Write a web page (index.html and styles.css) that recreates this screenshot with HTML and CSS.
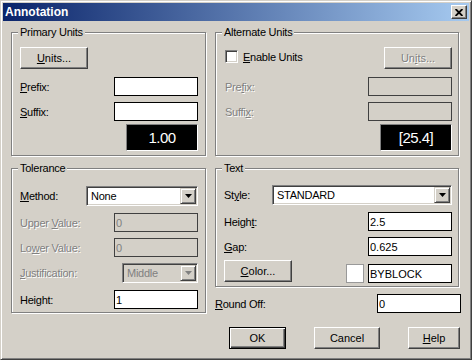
FILE: index.html
```html
<!doctype html>
<html lang="en">
<head>
    <meta charset="utf-8">
    <title>Annotation</title>
    <link rel="stylesheet" href="styles.css">
</head>
<body>
<div class="window">
    <div class="titlebar">
        <span class="title">Annotation</span>
        <button class="close" title="Close">
            <svg width="8" height="7" viewBox="0 0 8 7"><path d="M0.6 0 L7.4 7 M7.4 0 L0.6 7" stroke="#000" stroke-width="1.8" fill="none"/></svg>
        </button>
    </div>

    <div class="client">
        <div class="group">
            <div class="legend">Primary Units</div>
            <button class="btn btn-wide"><u>U</u>nits...</button>
            <div class="row mt8"><span><u>P</u>refix:</span><input class="field" value=""></div>
            <div class="row mt6"><span><u>S</u>uffix:</span><input class="field" value=""></div>
            <div class="row mt3"><span></span><div class="sample">1.00</div></div>
        </div>

        <div class="group">
            <div class="legend">Alternate Units</div>
            <div class="row">
                <div class="check"><span class="checkbox"></span><span><u>E</u>nable Units</span></div>
                <button class="btn btn-wide" disabled><span class="dim">Un<u>i</u>ts...</span></button>
            </div>
            <div class="row mt8"><span class="dim">Pre<u>f</u>ix:</span><input class="field" disabled value=""></div>
            <div class="row mt6"><span class="dim">Suffi<u>x</u>:</span><input class="field" disabled value=""></div>
            <div class="row mt3"><span></span><div class="sample">[25.4]</div></div>
        </div>

        <div class="group tolerance">
            <div class="legend">Tolerance</div>
            <div class="row">
                <span><u>M</u>ethod:</span>
                <div class="combo combo-method"><span class="combo-value">None</span><span class="combo-arrow"><svg width="7" height="4" viewBox="0 0 7 4"><path d="M0 0 H7 L3.5 4 Z" fill="#000"/></svg></span></div>
            </div>
            <div class="row mt7"><span class="dim">Upper <u>V</u>alue:</span><input class="field" disabled value="0"></div>
            <div class="row mt6"><span class="dim">Lo<u>w</u>er Value:</span><input class="field" disabled value="0"></div>
            <div class="row mt6">
                <span class="dim"><u>J</u>ustification:</span>
                <div class="combo combo-just disabled"><span class="combo-value">Middle</span><span class="combo-arrow"><svg width="7" height="4" viewBox="0 0 7 4"><path d="M0 0 H7 L3.5 4 Z" fill="#808080"/></svg></span></div>
            </div>
            <div class="row mt7"><span>Hei<u>g</u>ht:</span><input class="field" value="1"></div>
        </div>

        <div class="stack">
            <div class="group text">
                <div class="legend">Text</div>
                <div class="row">
                    <span>St<u>y</u>le:</span>
                    <div class="combo combo-style"><span class="combo-value">STANDARD</span><span class="combo-arrow"><svg width="7" height="4" viewBox="0 0 7 4"><path d="M0 0 H7 L3.5 4 Z" fill="#000"/></svg></span></div>
                </div>
                <div class="row mt7"><span>Heigh<u>t</u>:</span><input class="field" value="2.5"></div>
                <div class="row mt6"><span><u>G</u>ap:</span><input class="field" value="0.625"></div>
                <div class="row color-row mt4">
                    <button class="btn btn-wide"><u>C</u>olor...</button>
                    <div class="color-pick"><span class="swatch"></span><input class="field" value="BYBLOCK"></div>
                </div>
            </div>
            <div class="row roundoff"><span><u>R</u>ound Off:</span><input class="field" value="0"></div>
        </div>

        <div class="actions">
            <button class="btn btn-default">OK</button>
            <button class="btn btn-cancel">Cancel</button>
            <button class="btn btn-help"><u>H</u>elp</button>
        </div>
    </div>
</div>
</body>
</html>
```

FILE: styles.css
```css
html, body {
    margin: 0;
}
body {
    font-family: "Liberation Sans", Arial, sans-serif;
    font-size: 11px;
    letter-spacing: -0.25px;
    background: #d4d0c8;
    color: #000;
}
.window {
    box-sizing: border-box;
    width: 472px;
    height: 360px;
    padding: 2px;
    background: #d4d0c8;
    border: 1px solid;
    border-color: #d4d0c8 #404040 #404040 #d4d0c8;
    box-shadow: inset 1px 1px #fff, inset -1px -1px #808080;
}
.titlebar {
    display: flex;
    align-items: center;
    justify-content: space-between;
    height: 18px;
    padding: 0 2px;
    background: linear-gradient(to right, #0a246a, #a6caf0);
}
.title {
    color: #fff;
    font-weight: bold;
    font-size: 12px;
    letter-spacing: 0;
}
.close {
    box-sizing: border-box;
    width: 16px;
    height: 14px;
    padding: 0;
    display: flex;
    align-items: center;
    justify-content: center;
    background: #d4d0c8;
    border: 1px solid;
    border-color: #fff #404040 #404040 #fff;
    box-shadow: inset -1px -1px #808080;
}
.close svg {
    display: block;
}

.client {
    display: grid;
    grid-template-columns: 195px 244px;
    grid-template-rows: 124px 145px auto;
    column-gap: 9px;
    row-gap: 12px;
    padding: 11px 0 0 8px;
}

.group {
    position: relative;
    box-sizing: border-box;
    display: flex;
    flex-direction: column;
    padding: 14px 7px 0 8px;
    border: 1px solid #808080;
    box-shadow: inset 1px 1px #fff, 1px 1px #fff;
}
.group + .group {
    padding-left: 9px;
    padding-right: 6px;
}
.group.tolerance {
    padding: 17px 7px 0 8px;
}
.group.text {
    height: 119px;
    padding: 16px 6px 0 8px;
}
.legend {
    position: absolute;
    top: -7px;
    left: 6px;
    padding: 0 2px;
    line-height: 13px;
    background: #d4d0c8;
}

.row {
    display: flex;
    align-items: center;
    justify-content: space-between;
}
.mt3 { margin-top: 3px; }
.mt4 { margin-top: 4px; }
.mt6 { margin-top: 6px; }
.mt7 { margin-top: 7px; }
.mt8 { margin-top: 8px; }

.dim {
    color: #808080;
    text-shadow: 1px 1px #fff;
}

.btn {
    box-sizing: border-box;
    height: 22px;
    padding: 0;
    font: inherit;
    color: #000;
    background: #d4d0c8;
    border: 1px solid;
    border-color: #fff #404040 #404040 #fff;
    box-shadow: inset -1px -1px #808080;
}
.btn-wide {
    width: 68px;
}
.btn-default {
    width: 57px;
    border: 1px solid #000;
    box-shadow: inset 1px 1px #fff, inset -1px -1px #404040, inset -2px -2px #808080;
}
.btn-cancel {
    width: 66px;
}
.btn-help {
    width: 52px;
}

.field {
    box-sizing: border-box;
    width: 84px;
    height: 19px;
    margin: 0;
    padding: 0 1px;
    font: inherit;
    color: #000;
    background: #fff;
    border: 1px solid #000;
    outline: none;
}
.field:disabled {
    color: #808080;
    background: #d4d0c8;
    border-color: #404040;
}

.sample {
    box-sizing: border-box;
    width: 72px;
    height: 27px;
    display: flex;
    align-items: center;
    justify-content: center;
    color: #fff;
    background: #000;
    font-size: 15px;
    letter-spacing: -0.5px;
    border: 1px solid;
    border-color: #808080 #fff #fff #808080;
}

.check {
    display: flex;
    align-items: center;
    gap: 5px;
    margin-bottom: 3px;
}
.checkbox {
    box-sizing: border-box;
    width: 13px;
    height: 13px;
    background: #fff;
    border: 1px solid;
    border-color: #808080 #fff #fff #808080;
    box-shadow: inset 1px 1px #404040, inset -1px -1px #d4d0c8;
}

.combo {
    box-sizing: border-box;
    height: 20px;
    display: flex;
    align-items: stretch;
    padding: 1px;
    background: #fff;
    border: 1px solid;
    border-color: #808080 #fff #fff #808080;
    box-shadow: inset 1px 1px #404040, inset -1px -1px #d4d0c8;
}
.combo-value {
    flex: 1;
    display: flex;
    align-items: center;
    padding-left: 3px;
}
.combo-arrow {
    box-sizing: border-box;
    width: 16px;
    display: flex;
    align-items: center;
    justify-content: center;
    background: #d4d0c8;
    border: 1px solid;
    border-color: #d4d0c8 #404040 #404040 #d4d0c8;
    box-shadow: inset 1px 1px #fff, inset -1px -1px #808080;
}
.combo-method {
    width: 112px;
}
.combo-just {
    width: 76px;
}
.combo-style {
    width: 180px;
}
.combo.disabled {
    color: #808080;
    background: #d4d0c8;
}

.color-row {
    align-items: flex-start;
}
.color-pick {
    display: flex;
    gap: 4px;
    margin-top: 4px;
}
.swatch {
    box-sizing: border-box;
    width: 18px;
    height: 19px;
    background: #fff;
    border: 1px solid #999;
}

.stack {
    display: flex;
    flex-direction: column;
}
.roundoff {
    margin-top: 7px;
    margin-right: -2px;
}

.actions {
    grid-column: 1 / -1;
    display: flex;
    justify-content: flex-end;
    gap: 28px;
    margin-top: 2px;
    margin-right: -1px;
}
```
